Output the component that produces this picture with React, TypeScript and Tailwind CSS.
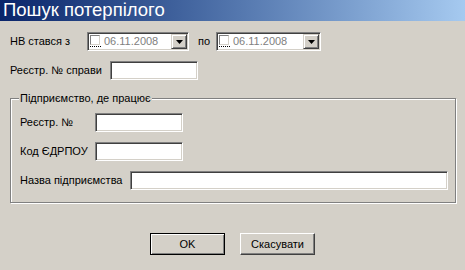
import { FunctionComponent } from "react";

const sunken =
  "border border-t-[#808080] border-l-[#808080] border-b-white border-r-white shadow-[inset_1px_1px_0_#404040,inset_-1px_-1px_0_#d4d0c8] bg-white";

const TextBox: FunctionComponent<{ width: string }> = ({ width }) => (
  <div className={`${width} h-[19px] ${sunken}`} />
);

const DatePicker: FunctionComponent<{ width: string }> = ({ width }) => (
  <div className={`${width} h-[19px] ${sunken} flex items-center pl-[2px] pr-[1px]`}>
    <div className="relative w-[11px] h-[12px] mt-[-1px]">
      <div className="w-[10px] h-[10px] border border-t-[#808080] border-l-[#808080] border-b-[#d4d0c8] border-r-[#d4d0c8] bg-white" />
      <div className="absolute left-0 top-[11px] w-[11px] border-t border-dotted border-black" />
    </div>
    <span className="ml-[3px] text-[#808080] leading-none">06.11.2008</span>
    <div className="ml-auto w-[16px] h-[15px] flex items-center justify-center bg-[#d4d0c8] border border-t-[#d4d0c8] border-l-[#d4d0c8] border-r-[#404040] border-b-[#404040] shadow-[inset_1px_1px_0_#fff,inset_-1px_-1px_0_#808080]">
      <svg width="7" height="4" viewBox="0 0 7 4">
        <path d="M0 0h7L3.5 4z" fill="#000" />
      </svg>
    </div>
  </div>
);

const App: FunctionComponent = () => {
  return (
    <div
      className="w-[465px] h-[270px] bg-[#d4d0c8] flex flex-col text-[11px] text-black overflow-hidden"
      style={{ fontFamily: '"Liberation Sans", Arial, sans-serif' }}
    >
      {/* title bar */}
      <div className="h-[21px] flex items-center pl-[3px] bg-gradient-to-r from-[#0a246a] to-[#a6caf0]">
        <span className="text-white text-[18.5px] leading-none">Пошук потерпілого</span>
      </div>

      <div className="mt-[11px] flex items-center h-[19px] pl-[10px]">
        <span className="w-[77px]">НВ стався з</span>
        <DatePicker width="w-[102px]" />
        <span className="ml-[9px] w-[18px]">по</span>
        <DatePicker width="w-[105px]" />
      </div>

      <div className="mt-[10px] flex items-center h-[19px] pl-[10px]">
        <span className="w-[100px]">Реєстр. № справи</span>
        <TextBox width="w-[88px]" />
      </div>

      {/* group box */}
      <div className="relative mt-[18px] ml-[10px] w-[446px] h-[105px] border border-[#808080] shadow-[inset_1px_1px_0_#fff,1px_1px_0_#fff]">
        <span className="absolute -top-[7px] left-[8px] px-[1px] bg-[#d4d0c8] leading-[13px]">
          Підприємство, де працює
        </span>
        <div className="pt-[14px] pl-[9px] flex flex-col gap-[10px]">
          <div className="flex items-center h-[19px]">
            <span className="w-[75px]">Реєстр. №</span>
            <TextBox width="w-[88px]" />
          </div>
          <div className="flex items-center h-[19px]">
            <span className="w-[75px]">Код ЄДРПОУ</span>
            <TextBox width="w-[88px]" />
          </div>
          <div className="flex items-center h-[19px]">
            <span className="w-[110px]">Назва підприємства</span>
            <TextBox width="w-[318px]" />
          </div>
        </div>
      </div>

      {/* buttons */}
      <div className="mt-[30px] flex justify-center gap-[15px]">
        <button className="w-[75px] h-[22px] bg-[#d4d0c8] border border-black shadow-[inset_1px_1px_0_#fff,inset_-1px_-1px_0_#808080]">
          OK
        </button>
        <button className="w-[75px] h-[22px] bg-[#d4d0c8] border border-t-white border-l-white border-r-[#404040] border-b-[#404040] shadow-[inset_-1px_-1px_0_#808080]">
          Скасувати
        </button>
      </div>
    </div>
  );
};

export default App;
